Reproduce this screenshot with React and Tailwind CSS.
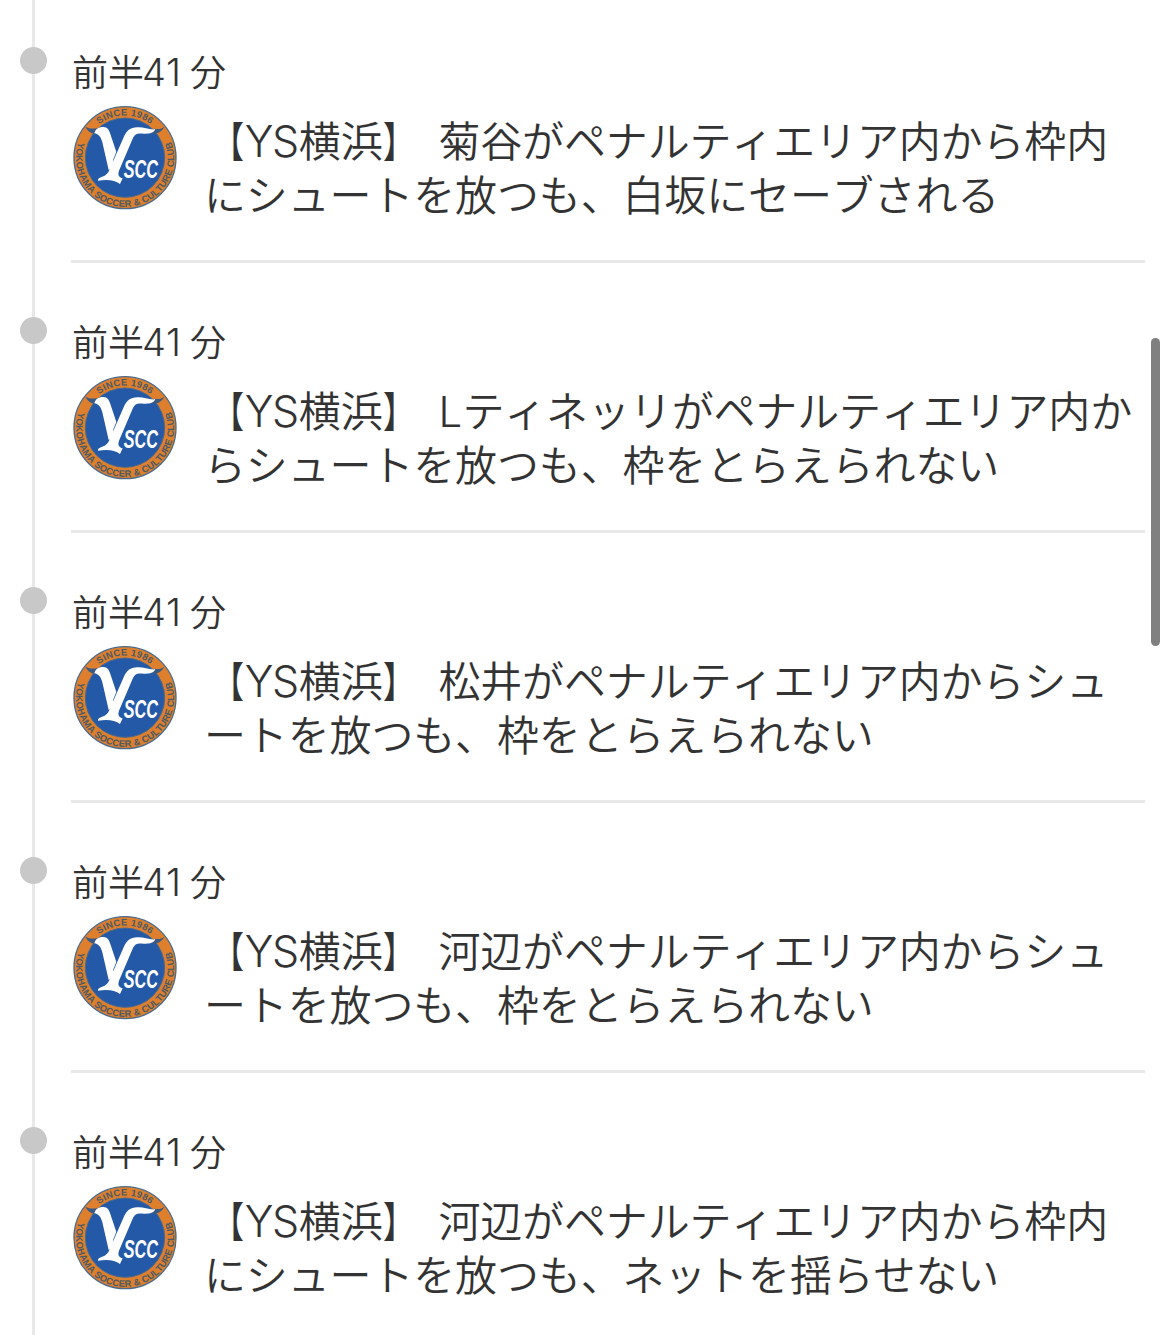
import React from "react";

const events = [
  {
    id: 1,
    time: ["前半", "41", "分"],
    player: "菊谷がペナルティエリア内から枠内",
    rest: "にシュートを放つも、白坂にセーブされる",
  },
  {
    id: 2,
    time: ["前半", "41", "分"],
    initial: "L",
    player: "ティネッリがペナルティエリア内か",
    rest: "らシュートを放つも、枠をとらえられない",
  },
  {
    id: 3,
    time: ["前半", "41", "分"],
    player: "松井がペナルティエリア内からシュ",
    rest: "ートを放つも、枠をとらえられない",
  },
  {
    id: 4,
    time: ["前半", "41", "分"],
    player: "河辺がペナルティエリア内からシュ",
    rest: "ートを放つも、枠をとらえられない",
  },
  {
    id: 5,
    time: ["前半", "41", "分"],
    player: "河辺がペナルティエリア内から枠内",
    rest: "にシュートを放つも、ネットを揺らせない",
  },
];

const ClubLogo = ({ id }) => (
  <svg viewBox="24 21 318 318" className="w-[106px] h-[106px] shrink-0">
    <defs>
      <path id={`top-${id}`} d="M 95 88 A 126 126 0 0 1 271 88" />
      <path id={`bottom-${id}`} d="M 45 129 A 147 147 0 1 0 321 129" />
    </defs>

    {/* Ring */}
    <circle cx="183" cy="179" r="153" fill="#dd7f2c" stroke="#4a6a8c" strokeWidth="4" />
    <circle cx="183" cy="179" r="119" fill="#2459a8" stroke="#4a6a8c" strokeWidth="3" />

    {/* Horns */}
    <path d="M64 86 C76 92 86 93 101 90 L91 108 C79 105 69 97 64 86 Z" fill="#3a5a84" />
    <path d="M301 86 C292 93 284 95 270 92 L263 107 C280 109 294 100 301 86 Z" fill="#3a5a84" />

    {/* Y */}
    <path
      d="M91 106 C94 94 102 87 118 87 C131 87 135 96 139 108 L157 162 L148 184 L146 208 L134 216 L115 133 C110 116 104 108 91 106 Z"
      fill="#fff"
    />
    <path
      d="M102 248 C101 238 112 238 122 233 C132 227 135 218 139 209 L179 118 C187 98 199 89 220 88 C240 87 255 96 274 94 C268 106 254 108 239 107 C221 105 213 107 206 122 L165 218 C161 230 164 238 176 241 L168 258 C153 246 130 243 102 248 Z"
      fill="#fff"
    />

    <text
      x="179"
      y="240"
      textLength="103"
      lengthAdjust="spacingAndGlyphs"
      className="fill-white font-['Liberation_Sans',sans-serif] text-[78px] font-bold italic"
    >
      SCC
    </text>

    <g className="fill-[#4a5a68] font-['Liberation_Sans',sans-serif] text-[28px] font-bold">
      <text>
        <textPath href={`#top-${id}`} startOffset="14" textLength="166">
          SINCE 1986
        </textPath>
      </text>
      <text>
        <textPath href={`#bottom-${id}`} startOffset="3" textLength="560">
          YOKOHAMA SOCCER &amp; CULTURE CLUB
        </textPath>
      </text>
    </g>
  </svg>
);

const Latin = ({ className, children }) => (
  <span className={`inline-block font-['Inter',sans-serif] leading-none ${className}`}>
    {children}
  </span>
);

const TimelineItem = ({ event }) => {
  const [half, minute, unit] = event.time;

  return (
    <li className="flex h-[270px]">
      {/* Rail */}
      <div className="relative w-[71px] shrink-0 pl-8">
        <div className="h-full w-[3px] bg-[#e8e8e8]" />
        <span className="absolute left-5 top-[54px] size-[27px] rounded-full bg-[#c8c8c8]" />
      </div>

      <div className="h-[270px] w-[1074px] border-b-[3px] border-[#e8e8e8]">
        <p className="mt-[58px] h-[54px] pl-px text-[36px] leading-[38px]">
          {half}
          <Latin className="-ml-0.5 w-12 text-[38px] font-light">{minute}</Latin>
          {unit}
        </p>
        <div className="flex gap-[26px] pl-px">
          <ClubLogo id={event.id} />
          <p className="mt-[7px] whitespace-nowrap text-[42px] leading-[54px] tracking-[-0.15px]">
            <span className="inline-block origin-right scale-x-[.75] -ml-0.5 mr-px">【</span>
            <Latin className="w-[54px] text-[43px] font-light tracking-[-1.5px]">YS</Latin>
            横浜
            <span className="inline-block origin-left scale-x-[.75]">】</span>
            <span className="inline-block w-[14px]" />
            {event.initial && <Latin className="w-6 font-light">{event.initial}</Latin>}
            {event.player}
            <br />
            {event.rest}
          </p>
        </div>
      </div>
    </li>
  );
};

const App = () => {
  return (
    <main className="relative h-[1335px] w-[1169px] overflow-hidden bg-white font-['Noto_Sans_CJK_JP',sans-serif] font-[350] text-[#333] [text-spacing-trim:space-all] [font-kerning:none]">
      <ul className="-mt-[7px]">
        {events.map((event) => (
          <TimelineItem key={event.id} event={event} />
        ))}
      </ul>

      {/* Scrollbar */}
      <div className="absolute right-[9px] top-[338px] h-[308px] w-[9px] rounded-full bg-[#808080]" />
    </main>
  );
};

export default App;
